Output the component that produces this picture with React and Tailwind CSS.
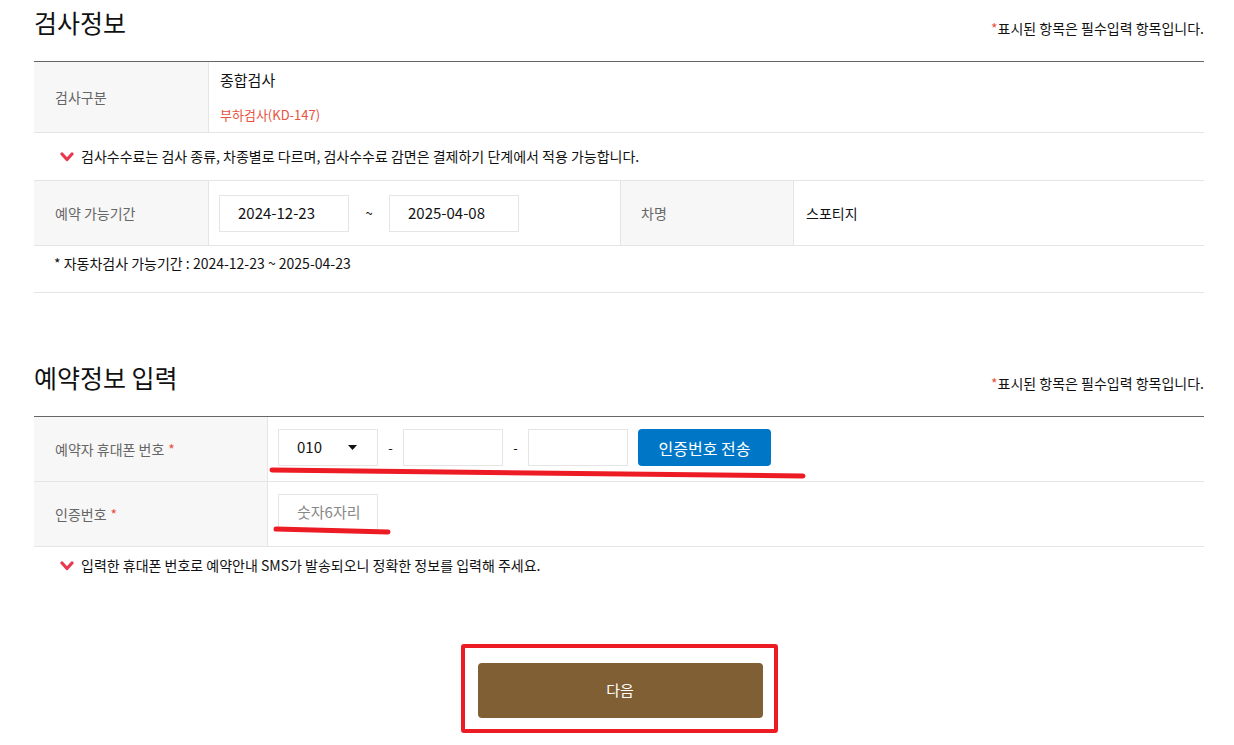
import React from 'react';

const font = { fontFamily: '"Noto Sans CJK KR", "Noto Sans", sans-serif' };

// red "V" check used in front of notices
function CheckMark() {
  return (
    <svg width="14" height="11" viewBox="0 0 14 11" className="shrink-0">
      <path d="M2 3 L7 8.5 L12 3" fill="none" stroke="#e8384f" strokeWidth="3.2" strokeLinecap="round" strokeLinejoin="round" />
    </svg>
  );
}

function SectionHeader({ title }) {
  return (
    <div className="flex justify-between items-start h-[61px]">
      <h2 className="text-[25px] leading-[40px] pt-[2px] text-[#111] font-normal">{title}</h2>
      <p className="mt-[18px] text-[14px] leading-[20px] text-[#111]">
        <span className="text-[#e8513d]">*</span>표시된 항목은 필수입력 항목입니다.
      </p>
    </div>
  );
}

export default function App() {
  return (
    <div className="relative w-[1234px] h-[745px] bg-white overflow-hidden" style={font}>
      <div className="ml-[34px] w-[1170px]">
        {/* 검사정보 */}
        <SectionHeader title="검사정보" />
        <div className="border-t border-[#666]">
          <div className="flex h-[71px] border-b border-[#e5e5e5]">
            <div className="w-[175px] bg-[#f7f7f7] border-r border-[#e5e5e5] flex items-center pl-[21px] text-[14px] text-[#666]">
              검사구분
            </div>
            <div className="pl-[11px] pt-[8px]">
              <p className="text-[15px] leading-[20px] text-[#111]">종합검사</p>
              <p className="mt-[15px] text-[13px] leading-[20px] text-[#e8513d]">부하검사(KD-147)</p>
            </div>
          </div>
          <div className="flex items-center gap-[7px] h-[48px] pl-[26px] border-b border-[#e5e5e5] text-[14px] text-[#111]">
            <CheckMark />
            <span>검사수수료는 검사 종류, 차종별로 다르며, 검사수수료 감면은 결제하기 단계에서 적용 가능합니다.</span>
          </div>
          <div className="flex h-[65px] border-b border-[#e5e5e5]">
            <div className="w-[175px] bg-[#f7f7f7] border-r border-[#e5e5e5] flex items-center pl-[21px] text-[14px] text-[#666]">
              예약 가능기간
            </div>
            <div className="w-[411px] flex items-center pl-[10px]">
              <div className="w-[130px] h-[37px] border border-[#e5e5e5] flex items-center pl-[18px] text-[15px] text-[#111]">2024-12-23</div>
              <span className="w-[40px] text-center text-[13px] text-[#111]">~</span>
              <div className="w-[130px] h-[37px] border border-[#e5e5e5] flex items-center pl-[18px] text-[15px] text-[#111]">2025-04-08</div>
            </div>
            <div className="w-[174px] bg-[#f7f7f7] border-x border-[#e5e5e5] flex items-center pl-[20px] text-[14px] text-[#666]">
              차명
            </div>
            <div className="flex items-center pl-[12px] text-[14px] text-[#111]">스포티지</div>
          </div>
          <div className="h-[47px] border-b border-[#e5e5e5] pl-[20px] pt-[8px] text-[14px] leading-[18px] text-[#111]">
            * 자동차검사 가능기간 : 2024-12-23 ~ 2025-04-23
          </div>
        </div>

        {/* 예약정보 입력 */}
        <div className="mt-[62px]">
          <SectionHeader title="예약정보 입력" />
          <div className="border-t border-[#666]">
            <div className="flex h-[65px] border-b border-[#e5e5e5]">
              <div className="w-[234px] bg-[#f7f7f7] border-r border-[#e5e5e5] flex items-center pl-[21px] text-[14px] text-[#666]">
                예약자 휴대폰 번호 <span className="ml-[4px] text-[#e8513d]">*</span>
              </div>
              <div className="flex items-center pl-[10px] pb-[3px]">
                <div className="w-[100px] h-[37px] border border-[#e5e5e5] flex items-center justify-between pl-[18px] pr-[20px] text-[15px] text-[#111]">
                  <span>010</span>
                  <svg width="9" height="5" viewBox="0 0 9 5"><path d="M0 0 H9 L4.5 5 Z" fill="#111" /></svg>
                </div>
                <span className="w-[25px] text-center text-[13px] text-[#111]">-</span>
                <div className="w-[100px] h-[37px] border border-[#e5e5e5]" />
                <span className="w-[25px] text-center text-[13px] text-[#111]">-</span>
                <div className="w-[100px] h-[37px] border border-[#e5e5e5]" />
                <button className="ml-[10px] w-[133px] h-[37px] rounded-[4px] bg-[#0077c6] text-white text-[16px]">
                  인증번호 전송
                </button>
              </div>
            </div>
            <div className="flex h-[65px] border-b border-[#e5e5e5]">
              <div className="w-[234px] bg-[#f7f7f7] border-r border-[#e5e5e5] flex items-center pl-[21px] text-[14px] text-[#666]">
                인증번호 <span className="ml-[4px] text-[#e8513d]">*</span>
              </div>
              <div className="flex items-center pl-[10px] pb-[3px]">
                <div className="w-[100px] h-[37px] border border-[#e5e5e5] flex items-center pl-[18px] text-[15px] text-[#888]">
                  숫자6자리
                </div>
              </div>
            </div>
            <div className="flex items-center gap-[7px] h-[36px] pl-[26px] text-[14px] text-[#111]">
              <CheckMark />
              <span>입력한 휴대폰 번호로 예약안내 SMS가 발송되오니 정확한 정보를 입력해 주세요.</span>
            </div>
          </div>
        </div>

        {/* 다음 button (with red highlight box) */}
        <div className="flex justify-center mt-[61px]">
          <div className="border-4 border-[#ed1c24] rounded-[3px] pt-[15px] pb-[11px] pl-[13px] pr-[11px]">
            <button className="w-[285px] h-[55px] rounded-[4px] bg-[#7f5f33] text-white text-[15px]">다음</button>
          </div>
        </div>
      </div>

      {/* hand-drawn red underline annotations */}
      <svg className="absolute left-0 top-0 pointer-events-none" width="1234" height="745">
        <path d="M272 470 C 420 472, 600 474, 803 476" fill="none" stroke="#ed1c24" strokeWidth="5" strokeLinecap="round" />
        <path d="M276 529 C 320 530, 360 531, 388 532" fill="none" stroke="#ed1c24" strokeWidth="5" strokeLinecap="round" />
      </svg>
    </div>
  );
}
